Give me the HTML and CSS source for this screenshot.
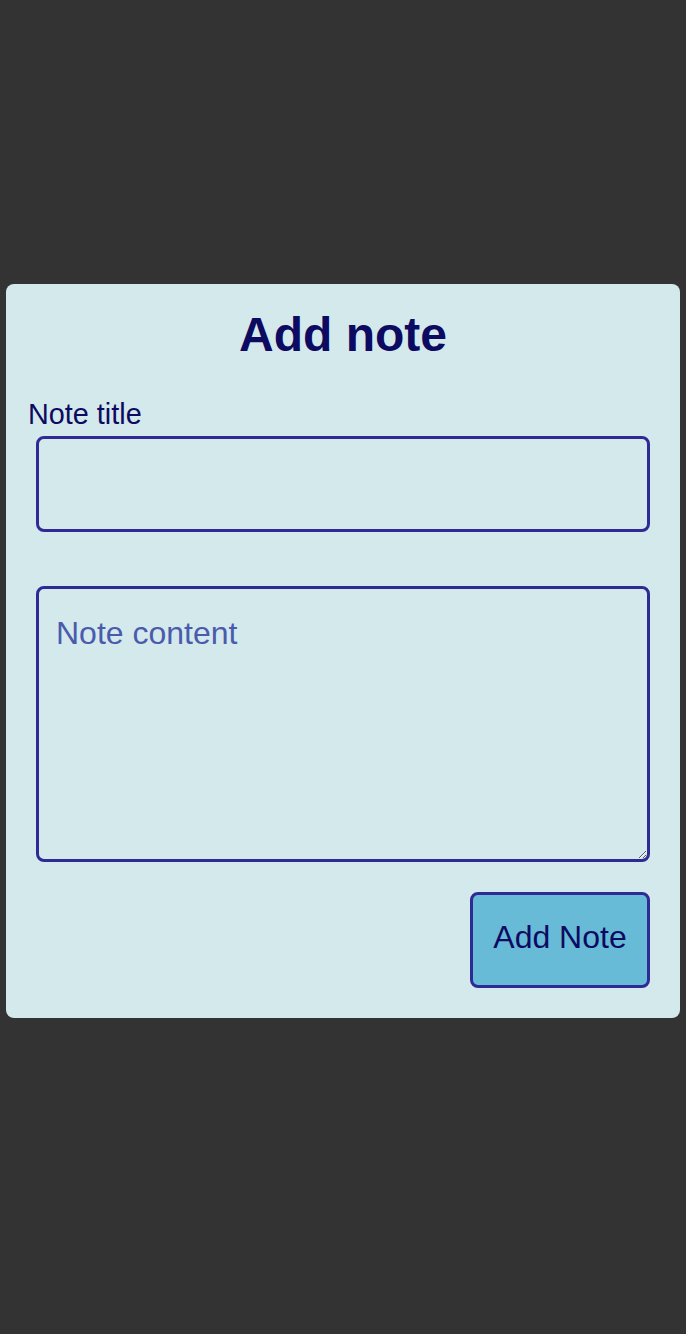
FILE: index.html
```html
<!DOCTYPE html>
<html lang="en">
<head>
<meta charset="utf-8">
<title>Add note</title>
<link rel="stylesheet" href="styles.css">
</head>
<body>
<main class="page">
  <form class="card">
    <h1 class="card-title">Add note</h1>
    <label class="field-label" for="title">Note title</label>
    <input class="field field-input" id="title" type="text">
    <textarea class="field field-area" placeholder="Note content"></textarea>
    <div class="actions">
      <button class="btn" type="button">Add Note</button>
    </div>
  </form>
</main>
</body>
</html>
```

FILE: styles.css
```css
html, body {
  margin: 0;
  padding: 0;
  background: #333333;
}
body {
  font-family: "Liberation Sans", Arial, sans-serif;
}
.page {
  min-height: 1334px;
  box-sizing: border-box;
  display: flex;
  flex-direction: column;
  justify-content: center;
  padding: 0 6px 32px;
}
.card {
  background: #d4e9eb;
  border-radius: 8px;
  padding: 23px 20px 30px;
  display: flex;
  flex-direction: column;
  color: #0d0a62;
}
.card-title {
  margin: 0;
  font-size: 48px;
  line-height: 56px;
  font-weight: 700;
  text-align: center;
}
.field-label {
  margin-top: 35px;
  padding-left: 2px;
  font-size: 28.8px;
  line-height: 33px;
}
.field {
  margin: 0 10px;
  box-sizing: border-box;
  border: 3px solid #2e2a96;
  border-radius: 8px;
  background: transparent;
  font-family: "Liberation Sans", Arial, sans-serif;
  font-size: 32px;
  color: #0d0a62;
  outline: none;
}
.field-input {
  margin-top: 5px;
  height: 96px;
  padding: 0 17px;
}
.field-area {
  margin-top: 54px;
  height: 276px;
  padding: 26px 17px;
  line-height: 37px;
}
.field-area::placeholder {
  color: #4a5bad;
  opacity: 1;
}
.actions {
  margin: 30px 10px 0;
  display: flex;
  justify-content: flex-end;
}
.btn {
  box-sizing: border-box;
  width: 180px;
  height: 96px;
  padding: 0 0 5px;
  border: 3px solid #2e2a96;
  border-radius: 8px;
  background: #67bbd6;
  color: #0d0a62;
  font-family: "Liberation Sans", Arial, sans-serif;
  font-size: 32px;
  text-align: center;
}
```
